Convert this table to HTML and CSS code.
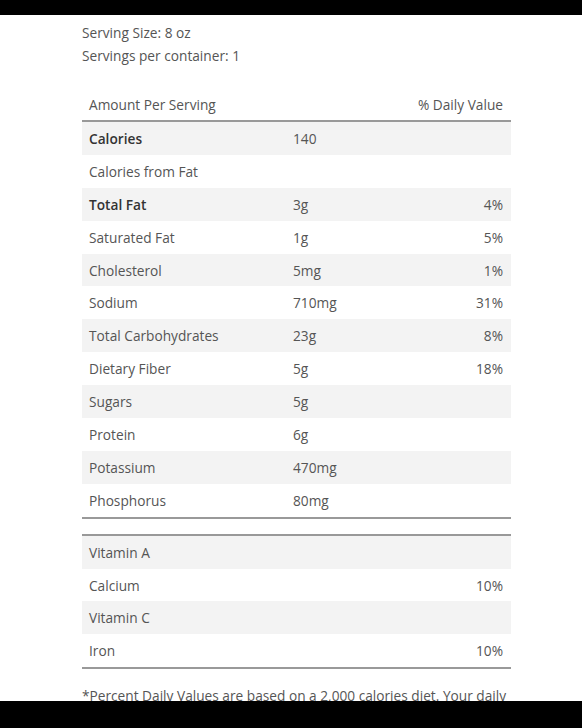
FILE: index.html
```html
<!DOCTYPE html>
<html lang="en">
<head>
<meta charset="utf-8">
<title>Nutrition Facts</title>
<link rel="stylesheet" href="styles.css">
</head>
<body>
<div class="page">
  <div class="serving">
    <p>Serving Size: 8 oz</p>
    <p>Servings per container: 1</p>
  </div>

  <div class="facts">
    <div class="row head">
      <span>Amount Per Serving</span>
      <span></span>
      <span class="dv">% Daily Value</span>
    </div>
    <div class="rows">
      <div class="row"><span class="strong">Calories</span><span>140</span><span class="dv"></span></div>
      <div class="row"><span>Calories from Fat</span><span></span><span class="dv"></span></div>
      <div class="row"><span class="strong">Total Fat</span><span>3g</span><span class="dv">4%</span></div>
      <div class="row"><span>Saturated Fat</span><span>1g</span><span class="dv">5%</span></div>
      <div class="row"><span>Cholesterol</span><span>5mg</span><span class="dv">1%</span></div>
      <div class="row"><span>Sodium</span><span>710mg</span><span class="dv">31%</span></div>
      <div class="row"><span>Total Carbohydrates</span><span>23g</span><span class="dv">8%</span></div>
      <div class="row"><span>Dietary Fiber</span><span>5g</span><span class="dv">18%</span></div>
      <div class="row"><span>Sugars</span><span>5g</span><span class="dv"></span></div>
      <div class="row"><span>Protein</span><span>6g</span><span class="dv"></span></div>
      <div class="row"><span>Potassium</span><span>470mg</span><span class="dv"></span></div>
      <div class="row"><span>Phosphorus</span><span>80mg</span><span class="dv"></span></div>
    </div>
  </div>

  <div class="facts vitamins">
    <div class="rows">
      <div class="row"><span>Vitamin A</span><span></span><span class="dv"></span></div>
      <div class="row"><span>Calcium</span><span></span><span class="dv">10%</span></div>
      <div class="row"><span>Vitamin C</span><span></span><span class="dv"></span></div>
      <div class="row"><span>Iron</span><span></span><span class="dv">10%</span></div>
    </div>
  </div>

  <p class="note">*Percent Daily Values are based on a 2,000 calories diet. Your daily values may be higher or lower depending on your calorie needs.</p>
</div>
</body>
</html>
```

FILE: styles.css
```css
html, body {
  margin: 0;
  padding: 0;
  background: #000;
}

body {
  padding-top: 15px;
  font-family: "Open Sans", "Noto Sans", sans-serif;
  font-size: 13.7px;
  color: #555;
}

.page {
  background: #fff;
  height: 686px;
  overflow: hidden;
  box-sizing: border-box;
  padding: 6px 71px 0 82px;
}

.serving p {
  margin: 0;
  line-height: 23px;
}

.facts {
  margin-top: 22px;
}

.row {
  display: grid;
  grid-template-columns: 204px 1fr 110px;
  height: 32.9px;
  align-items: center;
  padding: 0 8px 0 7px;
}

.row.head {
  height: 31px;
  border-bottom: 2px solid #999;
}

.rows {
  border-bottom: 2px solid #999;
}

.rows .row:nth-child(odd) {
  background: #f3f3f3;
}

.vitamins {
  margin-top: 15px;
  border-top: 2px solid #999;
}

.strong {
  font-weight: 600;
  color: #333;
}

.dv {
  text-align: right;
}

.note {
  margin: 15px 0 0;
  line-height: 23px;
}
```
